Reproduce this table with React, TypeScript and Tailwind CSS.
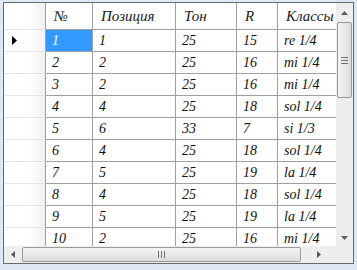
import React from "react";

const rows = [
  ["1", "1", "25", "15", "re 1/4"],
  ["2", "2", "25", "16", "mi 1/4"],
  ["3", "2", "25", "16", "mi 1/4"],
  ["4", "4", "25", "18", "sol 1/4"],
  ["5", "6", "33", "7", "si 1/3"],
  ["6", "4", "25", "18", "sol 1/4"],
  ["7", "5", "25", "19", "la 1/4"],
  ["8", "4", "25", "18", "sol 1/4"],
  ["9", "5", "25", "19", "la 1/4"],
  ["10", "2", "25", "16", "mi 1/4"],
];

const widths = ["w-[47px]", "w-[83px]", "w-[61px]", "w-[41px]", "w-[58px]"];
const headers = ["№", "Позиция", "Тон", "R", "Классы"];

function Arrow({ dir }: { dir: "up" | "down" | "left" | "right" }) {
  const pts = {
    up: "0,4 3.5,0 7,4",
    down: "0,0 3.5,4 7,0",
    left: "4,0 0,3.5 4,7",
    right: "0,0 4,3.5 0,7",
  }[dir];
  const vert = dir === "up" || dir === "down";
  return (
    <svg width={vert ? 7 : 4} height={vert ? 4 : 7} className="block">
      <polygon points={pts} fill="#5a5a5a" />
    </svg>
  );
}

export default function App() {
  return (
    <div
      className="w-[357px] h-[270px] bg-[#dde8f4] pl-[3px] pt-[2px]"
      style={{ fontFamily: '"Liberation Serif", serif' }}
    >
      <div className="w-[351px] h-[262px] border border-[#6a6a6a] bg-white flex flex-col overflow-hidden">
        <div className="flex h-[243px]">
          {/* grid */}
          <div className="w-[332px] h-[243px] overflow-hidden">
            <div className="flex h-[27px]">
              <div className="w-[42px] border-r border-b border-r-[#a0a0a0] border-b-[#e4e4e4] bg-gradient-to-r from-white from-60% to-[#f1f1f1]" />
              {headers.map((h, i) => (
                <div
                  key={h}
                  className={`${widths[i]} ${i < 4 ? "border-r" : ""} border-b border-[#a0a0a0] pl-[8px] flex items-center text-[15px] italic font-medium text-[#1a1a1a]`}
                >
                  {h}
                </div>
              ))}
            </div>
            {rows.map((r, ri) => (
              <div key={ri} className="flex h-[22px]">
                <div className="w-[42px] border-r border-b border-r-[#a0a0a0] border-b-[#e4e4e4] bg-gradient-to-r from-white from-60% to-[#f1f1f1] flex items-center pl-[8px]">
                  {ri === 0 && (
                    <svg width="5" height="9" className="block">
                      <polygon points="0,0 5,4.5 0,9" fill="#000" />
                    </svg>
                  )}
                </div>
                {r.map((c, ci) => (
                  <div
                    key={ci}
                    className={`${widths[ci]} ${ci < 4 ? "border-r" : ""} border-b border-[#a0a0a0] ${
                      ri === 0 && ci === 0 ? "bg-[#3399ff] text-white" : "text-[#111]"
                    } pl-[6px] flex items-center text-[14px] italic`}
                  >
                    {c}
                  </div>
                ))}
              </div>
            ))}
          </div>
          {/* vertical scrollbar */}
          <div className="w-[17px] h-[243px] bg-[#eeeeee] flex flex-col items-center">
            <div className="h-[19px] flex items-center justify-center">
              <Arrow dir="up" />
            </div>
            <div className="w-[15px] h-[76px] rounded-[2px] border border-[#9a9a9a] bg-gradient-to-r from-[#f4f4f4] to-[#dcdcdc] flex flex-col items-center justify-center gap-[2px]">
              <div className="w-[7px] h-px bg-[#707070]" />
              <div className="w-[7px] h-px bg-[#707070]" />
              <div className="w-[7px] h-px bg-[#707070]" />
            </div>
            <div className="flex-1" />
            <div className="h-[16px] flex items-center justify-center">
              <Arrow dir="down" />
            </div>
          </div>
        </div>
        {/* horizontal scrollbar */}
        <div className="flex h-[17px]">
          <div className="w-[332px] bg-[#eeeeee] flex items-center">
            <div className="w-[18px] flex items-center justify-center">
              <Arrow dir="left" />
            </div>
            <div className="w-[279px] h-[15px] rounded-[2px] border border-[#9a9a9a] bg-gradient-to-b from-[#f4f4f4] to-[#dcdcdc] flex items-center justify-center gap-[2px]">
              <div className="w-px h-[7px] bg-[#707070]" />
              <div className="w-px h-[7px] bg-[#707070]" />
              <div className="w-px h-[7px] bg-[#707070]" />
            </div>
            <div className="flex-1 flex items-center justify-center">
              <Arrow dir="right" />
            </div>
          </div>
          <div className="w-[17px] bg-[#eeeeee]" />
        </div>
      </div>
    </div>
  );
}
